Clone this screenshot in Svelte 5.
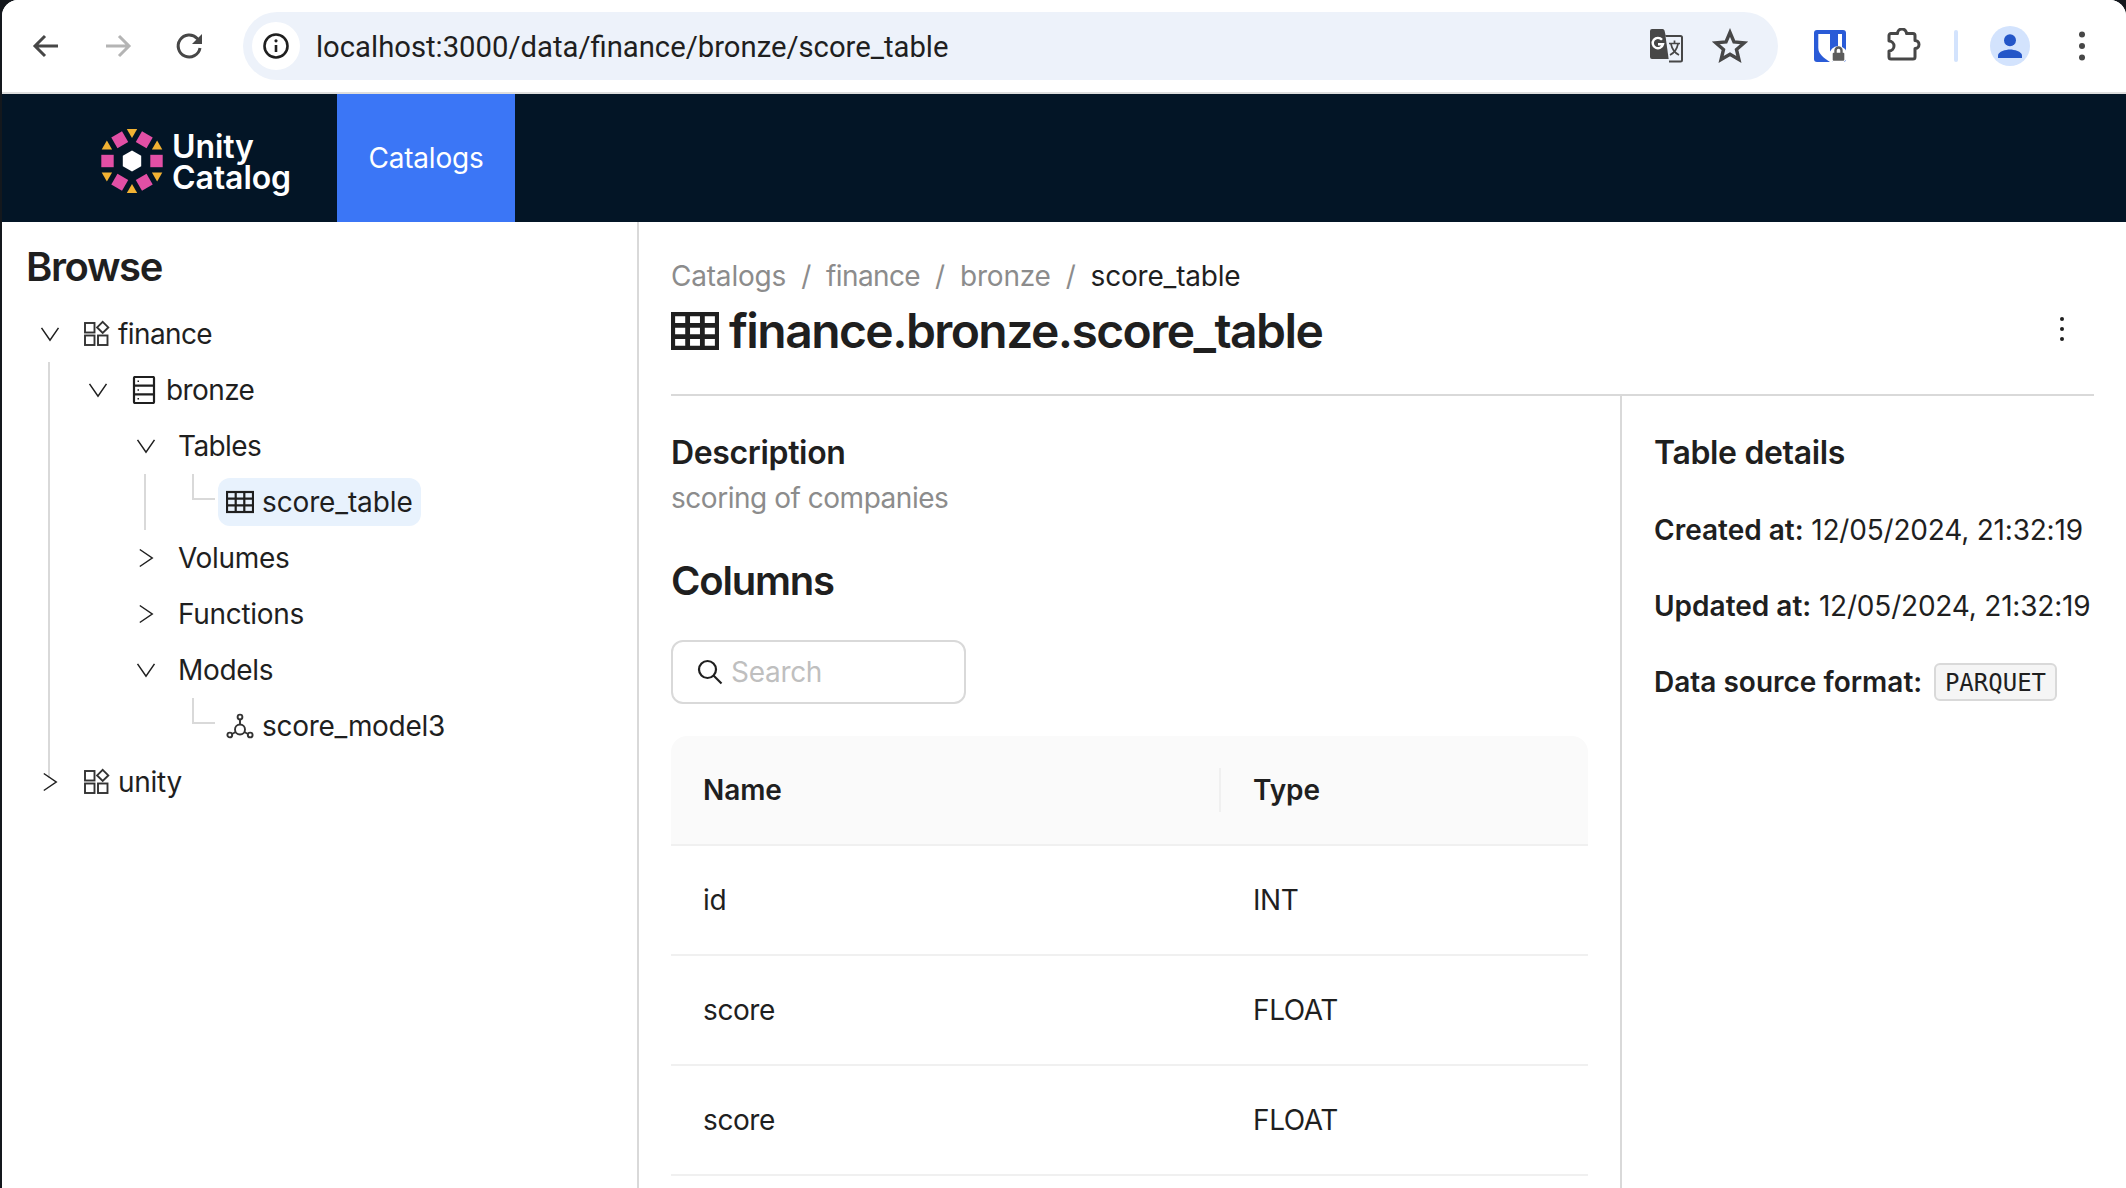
<script>
  const columns = [
    { name: 'id', type: 'INT' },
    { name: 'score', type: 'FLOAT' },
    { name: 'score', type: 'FLOAT' }
  ];
  const crumbs = ['Catalogs', 'finance', 'bronze'];
  const pinks = [0, 60, 120, 180, 240, 300];
  const yellows = [30, 90, 150, 210, 270, 330];
</script>

{#snippet chevDown()}
  <svg class="chev" viewBox="0 0 20 20"><path d="M1.500 3.800 10 16.200l8.500-12.400" /></svg>
{/snippet}
{#snippet chevRight()}
  <svg class="chev" viewBox="0 0 20 20"><path d="M3.800 1.500 16.200 10 3.800 18.500" /></svg>
{/snippet}
{#snippet catalogIcon()}
  <svg class="ico cat" viewBox="0 0 28 28">
    <rect x="3" y="3" width="9.500" height="9.500" /><rect x="3" y="15.500" width="9.500" height="9.500" /><rect x="16" y="15.500" width="9.500" height="9.500" />
    <path d="M20.700 1.800 26.300 7.400l-5.600 5.600-5.600-5.600z" />
  </svg>
{/snippet}
{#snippet schemaIcon()}
  <svg class="ico" viewBox="0 0 28 28">
    <rect x="4" y="1" width="20" height="26" rx="1" /><path d="M4 9.700h20M4 18.300h20" />
    <path class="pip" d="M7.500 5.300h1.500M7.500 14h1.500M7.500 22.700h1.500" />
  </svg>
{/snippet}
{#snippet tableIcon(cls)}
  <svg class={cls} viewBox="0 0 28 22">
    <rect x="1" y="1" width="26" height="20" /><path d="M1 7.700h26M1 14.300h26M9.700 1v20M18.300 1v20" />
  </svg>
{/snippet}
{#snippet modelIcon()}
  <svg class="ico cat" viewBox="0 0 28 28">
    <circle cx="14" cy="5" r="2.400" /><circle cx="3.800" cy="23" r="2.400" /><circle cx="24.200" cy="23" r="2.400" />
    <path d="M14 7.400v5.600M9.700 20 6 22M18.300 20l3.700 2" /><circle cx="14" cy="17.500" r="5" />
  </svg>
{/snippet}

<div class="app">
  <header class="chrome">
    <button class="tb" aria-label="Back">
      <svg viewBox="0 0 36 36"><path d="M30 18H8M17 8 7 18l10 10" /></svg>
    </button>
    <button class="tb off" aria-label="Forward">
      <svg viewBox="0 0 36 36"><path d="M6 18h22M19 8l10 10-10 10" /></svg>
    </button>
    <button class="tb" aria-label="Reload">
      <svg viewBox="0 0 36 36"><path d="M28 20a11 11 0 1 1-2.800-9.500L29 14" /><path class="solid" d="M30 6v10H20z" /></svg>
    </button>
    <div class="omni">
      <span class="info">
        <svg viewBox="0 0 28 28"><circle cx="14" cy="14" r="11.500" /><path d="M14 13v7" /><circle class="solid" cx="14" cy="8.800" r="1.600" /></svg>
      </span>
      <span class="url">localhost:3000/data/finance/bronze/score_table</span>
      <span class="omni-end">
        <span class="ob">
          <svg viewBox="0 0 36 36">
            <path class="solid" d="M2 3a2 2 0 0 1 2-2h10.500a2 2 0 0 1 2 1.500L23 31H4a2 2 0 0 1-2-2z" />
            <path class="page" d="M17.500 8h15a1.500 1.500 0 0 1 1.500 1.500v22.500a1.500 1.500 0 0 1-1.500 1.500H21" />
            <path class="gee" d="M14 11.800a5.200 5.200 0 1 0 1 4.400h-5" />
            <path class="wen" d="M21 15.500h11M26.500 12.500v3M23 16c1 5 4 9 8 11M30 16c-1 5-4 9-8 11" />
          </svg>
        </span>
        <span class="ob">
          <svg viewBox="0 0 36 36"><path class="thick" d="m18 4.500 4 9.500 10.300.8-7.800 6.700 2.400 10L18 26.200 9.100 31.500l2.400-10-7.800-6.700 10.300-.8z" /></svg>
        </span>
      </span>
    </div>
    <span class="tool ext">
      <svg viewBox="0 0 32 32">
        <rect class="blue" width="32" height="32" rx="3" />
        <path class="white" d="M4.300 4H28v16L18 32h-2C10 28 4.300 24 4.300 18z" />
        <path class="blue" d="M16 4h8v14l-8 5z" />
        <circle class="white" cx="24.300" cy="25" r="9" />
        <rect class="grey" x="18.700" y="22.700" width="11.600" height="8" rx="1" />
        <path class="lockbow" d="M21.500 23v-2.500a3 3 0 0 1 6 0V23" />
      </svg>
    </span>
    <span class="tool puzzle">
      <svg viewBox="0 0 36 36"><path d="M5 5.500h6.500a4.500 4.500 0 0 1 9 0H27a2 2 0 0 1 2 2v5a4 4 0 0 1 0 8v8.500a2 2 0 0 1-2 2H5a2 2 0 0 1-2-2V23a5 5 0 0 0 0-10V7.500a2 2 0 0 1 2-2z" /></svg>
    </span>
    <span class="vsep"></span>
    <span class="tool avatar">
      <svg viewBox="0 0 40 40"><circle class="face" cx="20" cy="20" r="20" /><circle class="who" cx="20" cy="14.300" r="6" /><path class="who" d="M8 32v-2.500c0-4 8-6 12-6s12 2 12 6V32z" /></svg>
    </span>
    <span class="tool menu">
      <svg viewBox="0 0 12 36"><circle cx="6" cy="6.500" r="3" /><circle cx="6" cy="18" r="3" /><circle cx="6" cy="29.500" r="3" /></svg>
    </span>
  </header>

  <nav class="nav">
    <a class="brand" href="#top">
      <svg class="mark" viewBox="-32 -32 64 64">
        {#each pinks as a}
          <rect class="pink" x="18.300" y="-6.200" width="12.400" height="12.400" transform="rotate({a})" />
        {/each}
        {#each yellows as a}
          <path class="amber" d="M32 -5.200 L32 5.200 L23 0 Z" transform="rotate({a})" />
        {/each}
        <path class="hex" d="M0-10.500 9.200-5.200V5.200L0 10.500-9.200 5.200V-5.200z" />
      </svg>
      <span class="brand-name">Unity<br />Catalog</span>
    </a>
    <a class="tab" href="#top">Catalogs</a>
  </nav>

  <div class="body">
    <aside class="side">
      <h2 class="browse">Browse</h2>
      <div class="tree">
        <div class="row"><span class="sw">{@render chevDown()}</span><span class="node">{@render catalogIcon()}<span class="fin">finance</span></span></div>
        <div class="sub guide1">
          <div class="row"><span class="sw">{@render chevDown()}</span><span class="node">{@render schemaIcon()}<span class="tight">bronze</span></span></div>
          <div class="sub">
            <div class="row"><span class="sw">{@render chevDown()}</span><span class="node"><span class="tight">Tables</span></span></div>
            <div class="sub guide2">
              <div class="row"><span class="sw leaf"></span><span class="node sel">{@render tableIcon('ico')}<span class="wide">score_table</span></span></div>
            </div>
            <div class="row"><span class="sw">{@render chevRight()}</span><span class="node">Volumes</span></div>
            <div class="row"><span class="sw">{@render chevRight()}</span><span class="node">Functions</span></div>
            <div class="row"><span class="sw">{@render chevDown()}</span><span class="node">Models</span></div>
            <div class="sub">
              <div class="row"><span class="sw leaf"></span><span class="node">{@render modelIcon()}score_model3</span></div>
            </div>
          </div>
        </div>
        <div class="row"><span class="sw">{@render chevRight()}</span><span class="node">{@render catalogIcon()}unity</span></div>
      </div>
    </aside>

    <main class="main">
      <section class="head">
        <div class="crumbs">
          {#each crumbs as c}
            <span class="crumb" class:fin={c === 'finance'}>{c}</span><span class="slash">/</span>
          {/each}
          <span class="here">score_table</span>
        </div>
        <div class="title-row">
          <h1 class="title">{@render tableIcon('title-ico')}finance.bronze.score_table</h1>
          <button class="more" aria-label="More">
            <svg viewBox="0 0 8 28"><circle cx="4" cy="4" r="2" /><circle cx="4" cy="14" r="2" /><circle cx="4" cy="24" r="2" /></svg>
          </button>
        </div>
      </section>

      <div class="split">
        <section class="left">
          <h3 class="h5">Description</h3>
          <p class="desc">scoring of companies</p>
          <h2 class="columns">Columns</h2>
          <label class="search">
            <svg viewBox="0 0 26 26"><circle cx="10.500" cy="10.500" r="8.500" /><path d="m16.500 16.500 8 8" /></svg>
            <input placeholder="Search" />
          </label>
          <table class="grid">
            <thead>
              <tr><th class="c1">Name</th><th>Type</th></tr>
            </thead>
            <tbody>
              {#each columns as c}
                <tr><td>{c.name}</td><td>{c.type}</td></tr>
              {/each}
            </tbody>
          </table>
        </section>
        <section class="right">
          <h3 class="h5">Table details</h3>
          <p class="kv"><b>Created at:</b> 12/05/2024, 21:32:19</p>
          <p class="kv"><b>Updated at:</b> 12/05/2024, 21:32:19</p>
          <p class="kv"><b>Data source format:</b> <code class="tag">PARQUET</code></p>
        </section>
      </div>
    </main>
  </div>
</div>

<style>
  :global(body) { background: #14181d; overflow: hidden; }
  * { box-sizing: border-box; }
  .app {
    width: 2124px; height: 1188px; margin-left: 2px; overflow: hidden;
    display: flex; flex-direction: column; background: #fff;
    font-family: Inter, "Liberation Sans", sans-serif; font-size: 28px; color: #1f1f1f;
    border-radius: 16px 16px 0 0;
  }
  h1, h2, h3, p { margin: 0; }
  button { border: 0; background: none; padding: 0; }
  a { text-decoration: none; color: inherit; }

  .chrome {
    height: 94px; flex: none; display: flex; align-items: center; padding-left: 8px;
    border-bottom: 2px solid #dedede; background: #fff;
  }
  .tb { width: 72px; height: 48px; display: flex; align-items: center; justify-content: center; }
  .tb svg { width: 36px; height: 36px; fill: none; stroke: #474747; stroke-width: 3; }
  .tb .solid { fill: #474747; stroke: none; }
  .tb.off svg { stroke: #b4b4b4; }
  .omni {
    margin-left: 17px; width: 1535px; height: 68px; border-radius: 34px; background: #edf2fa;
    display: flex; align-items: center; padding: 0 24px 0 9px;
  }
  .info { width: 48px; height: 48px; border-radius: 50%; background: #fff; display: flex; align-items: center; justify-content: center; }
  .info svg { width: 28px; height: 28px; fill: none; stroke: #1f1f1f; stroke-width: 2.600; }
  .info .solid { fill: #1f1f1f; stroke: none; }
  .url { margin-left: 16px; padding-top: 1px; font-family: Roboto, sans-serif; font-size: 29.250px; color: #1f1f1f; }
  .omni-end { margin-left: auto; display: flex; gap: 16px; }
  .ob { width: 48px; height: 48px; display: flex; align-items: center; justify-content: center; }
  .ob svg { width: 36px; height: 36px; fill: none; stroke: #474747; stroke-width: 3; stroke-linejoin: round; }
  .ob .thick { stroke-width: 3.400; stroke-linejoin: miter; }
  .ob .solid { fill: #474747; stroke: none; }
  .ob .page { stroke-width: 2; fill: #edf2fa; }
  .ob .gee { stroke: #fff; stroke-width: 2.400; stroke-linejoin: miter; }
  .ob .wen { stroke-width: 1.700; }
  .tool { width: 48px; height: 48px; display: flex; align-items: center; justify-content: center; }
  .ext { margin-left: 28px; }
  .ext svg { width: 32px; height: 32px; }
  .ext .blue { fill: #2a5bd7; }
  .ext .white { fill: #fff; }
  .ext .grey { fill: #5c5c5c; }
  .ext .lockbow { fill: none; stroke: #5c5c5c; stroke-width: 2.400; }
  .puzzle { margin-left: 26px; }
  .puzzle svg { width: 36px; height: 36px; fill: none; stroke: #474747; stroke-width: 3; stroke-linejoin: round; }
  .vsep { margin-left: 26px; width: 4px; height: 32px; border-radius: 2px; background: #d3e3fd; }
  .avatar { margin-left: 28px; }
  .avatar svg { width: 40px; height: 40px; }
  .avatar .face { fill: #d3e3fd; }
  .avatar .who { fill: #2456c8; }
  .menu { margin-left: 24px; }
  .menu svg { width: 12px; height: 36px; fill: #474747; }

  .nav { height: 128px; flex: none; display: flex; background: #031526; color: #fff; }
  .brand { width: 335px; padding: 5px 0 0 98px; display: flex; align-items: center; gap: 8px; }
  .mark { width: 64px; height: 64px; flex: none; }
  .pink { fill: #e24fa5; }
  .amber { fill: #f2b233; }
  .hex { fill: #fff; }
  .brand-name { font-size: 32px; line-height: 31px; font-weight: 600; letter-spacing: -0.100px; padding-top: 2px; }
  .tab { width: 178px; background: #3b76f6; display: flex; align-items: center; justify-content: center; letter-spacing: -0.220px; }

  .body { flex: 1; min-height: 0; display: flex; }
  .side { width: 637px; flex: none; border-right: 2px solid #d9d9d9; padding: 21px 0 0 24px; }
  .browse { font-size: 40px; line-height: 48px; font-weight: 600; letter-spacing: -1.400px; }
  .tree { margin-top: 15px; letter-spacing: -0.300px; }
  .row { height: 56px; display: flex; align-items: center; }
  .sw { width: 48px; height: 56px; flex: none; display: flex; align-items: center; justify-content: center; position: relative; }
  .chev { width: 20px; height: 20px; fill: none; stroke: #1f1f1f; stroke-width: 1.500; }
  .leaf::before {
    content: ""; position: absolute; left: 22px; top: 0; width: 21px; height: 24px;
    border-left: 2px solid #d9d9d9; border-bottom: 2px solid #d9d9d9;
  }
  .node { height: 48px; padding: 0 8px; display: flex; align-items: center; gap: 8px; border-radius: 12px; white-space: nowrap; }
  .fin { letter-spacing: -0.600px; }
  .tight { letter-spacing: -0.600px; }
  .wide { letter-spacing: -0.130px; }
  .sel { background: #e8f2fd; }
  .ico { width: 28px; height: 28px; flex: none; fill: none; stroke: #1f1f1f; stroke-width: 2.200; }
  .ico.cat { stroke: #333; stroke-width: 1.900; }
  .ico .pip { stroke-width: 1.600; }
  .sub { margin-left: 48px; position: relative; }
  .guide1::before, .guide2::before { content: ""; position: absolute; top: 0; bottom: 0; width: 2px; background: #d9d9d9; }
  .guide1::before { left: -26px; bottom: -24px; top: 0; }
  .guide2::before { left: -26px; }

  .main { flex: 1; min-width: 0; padding: 0 32px; }
  .head { height: 174px; border-bottom: 2px solid #d9d9d9; padding-top: 32px; }
  .crumbs { height: 44px; line-height: 44px; display: flex; letter-spacing: -0.200px; }
  .crumb, .slash { color: #8c8c8c; }
  .crumb.fin { letter-spacing: -0.600px; }
  .slash { margin: 0 15px; }
  .title-row { margin-top: 5px; height: 56px; display: flex; align-items: center; justify-content: space-between; }
  .title { font-size: 48px; line-height: 56px; font-weight: 600; display: flex; align-items: center; gap: 10px; letter-spacing: -1.570px; }
  .title-ico { width: 48px; height: 38px; fill: none; stroke: #1f1f1f; stroke-width: 2.800; }
  .more { width: 64px; height: 48px; display: flex; align-items: center; justify-content: center; position: relative; top: -2px; }
  .more svg { width: 8px; height: 28px; fill: #1f1f1f; }

  .split { display: flex; height: 800px; }
  .left { width: 951px; border-right: 2px solid #d9d9d9; padding: 37px 32px 0 0; flex: none; }
  .right { flex: 1; padding: 37px 0 0 32px; white-space: nowrap; }
  .h5 { font-size: 32px; line-height: 40px; font-weight: 600; letter-spacing: -0.350px; }
  .desc { margin-top: 3px; line-height: 44px; color: #8c8c8c; letter-spacing: -0.470px; }
  .columns { margin-top: 37px; font-size: 40px; line-height: 48px; font-weight: 600; letter-spacing: -1.200px; }
  .search {
    margin-top: 35px; width: 295px; height: 64px; border: 2px solid #d9d9d9; border-radius: 12px;
    display: flex; align-items: center; gap: 8px; padding-left: 24px;
  }
  .search svg { width: 26px; height: 26px; flex: none; fill: none; stroke: #1f1f1f; stroke-width: 2.200; }
  .search input { border: 0; outline: 0; min-width: 0; width: 200px; font: inherit; background: none; padding: 0; letter-spacing: -0.300px; }
  .search input::placeholder { color: #bfbfbf; opacity: 1; }
  .grid { margin-top: 32px; width: 100%; border-collapse: separate; border-spacing: 0; table-layout: fixed; }
  .grid th, .grid td { text-align: left; padding: 0 32px; }
  .grid th { height: 110px; background: #fafafa; font-weight: 600; border-bottom: 2px solid #f0f0f0; position: relative; letter-spacing: -0.100px; }
  .grid th:first-child { border-top-left-radius: 16px; }
  .grid th:last-child { border-top-right-radius: 16px; }
  .grid .c1 { width: 550px; }
  .grid .c1::after { content: ""; position: absolute; right: 0; top: 32px; height: 44px; width: 2px; background: #f0f0f0; }
  .grid td { height: 110px; border-bottom: 2px solid #f0f0f0; font-weight: 400; letter-spacing: -0.400px; }

  .kv { margin-top: 32px; line-height: 44px; letter-spacing: -0.200px; }
  .h5 + .kv { margin-top: 35px; }
  .kv b { font-weight: 600; letter-spacing: 0; }
  .tag {
    display: inline-block; margin-left: 4px; height: 38px; line-height: 36px; padding: 0 9px;
    border: 2px solid #d9d9d9; border-radius: 6px; background: #f5f5f5; letter-spacing: 0;
    font-family: "DejaVu Sans Mono", "Liberation Mono", monospace; font-size: 24px;
    vertical-align: middle; position: relative; top: -2px;
  }
</style>
